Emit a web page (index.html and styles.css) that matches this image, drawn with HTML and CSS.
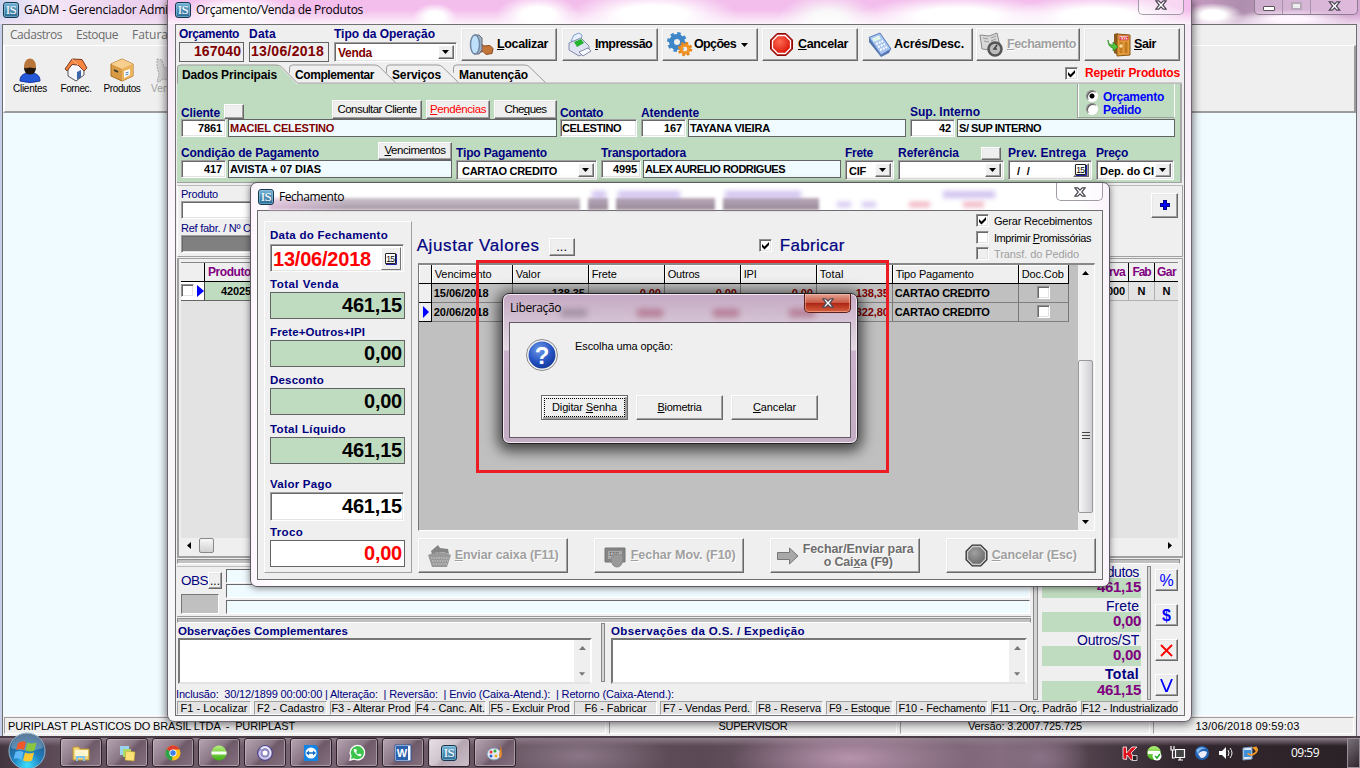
FILE: index.html
```html
<!DOCTYPE html>
<html lang="pt-BR">
<head>
<meta charset="utf-8">
<title>GADM - Gerenciador</title>
<link rel="stylesheet" href="styles.css">
</head>
<body>
<svg width="0" height="0" class="defs">
  <defs>
    <radialGradient id="gBlue" cx=".4" cy=".3" r=".8"><stop offset="0" stop-color="#6f9bea"/><stop offset=".6" stop-color="#2350c0"/><stop offset="1" stop-color="#10308c"/></radialGradient>
    <radialGradient id="gRed" cx=".4" cy=".35" r=".7"><stop offset="0" stop-color="#ff6a50"/><stop offset="1" stop-color="#d81208"/></radialGradient>
    <radialGradient id="gGrey" cx=".4" cy=".35" r=".7"><stop offset="0" stop-color="#a0a0a0"/><stop offset="1" stop-color="#6a6a6a"/></radialGradient>
    <radialGradient id="gOrb" cx=".5" cy=".9" r=".9"><stop offset="0" stop-color="#3fe0ff"/><stop offset=".45" stop-color="#1f7fc0"/><stop offset="1" stop-color="#2a4a70"/></radialGradient>
    <linearGradient id="gGreen" x1="0" y1="0" x2="0" y2="1"><stop offset="0" stop-color="#b6f07a"/><stop offset="1" stop-color="#3fae14"/></linearGradient>
    <symbol id="xmark" viewBox="0 0 12 10"><path d="M.8.8h3L6 3.1 8.200.8h3L7.800 5l3.400 4.200h-3L6 6.900 3.800 9.200h-3L4.200 5z" fill="#fff" stroke="#4c4652" stroke-width="1.200"/></symbol>
    <symbol id="down" viewBox="0 0 8 4"><path d="M0 0h7L3.500 4z"/></symbol>
    <symbol id="check" viewBox="0 0 9 9"><path d="M1 3v3l2.500 2.500L8 4V1L3.500 5.500z"/></symbol>
    <symbol id="cal" viewBox="0 0 12 12"><path d="M1 .5h9.500v10H.5v-10" fill="#fff" stroke="#222"/><path d="M11.500 1v10.500H1" fill="none" stroke="#22a"/><text x="1.200" y="8.800" font-size="8.500" font-weight="normal" textLength="8.800" font-family="Liberation Sans">15</text></symbol>
  </defs>
</svg>

<div class="main-win">
  <div class="main-title"><span class="is">IS</span><span data-w="144">GADM - Gerenciador Admi</span>
    <div class="capbtns"><b class="cmin"><i></i></b><b class="cmax"><i></i></b><b class="cx"><svg width="13" height="10"><use href="#xmark"/></svg></b></div>
  </div>
  <div class="main-client">
    <div class="menu"><span data-w="52">Cadastros</span><span data-w="42">Estoque</span><span data-w="36">Fatura</span></div>
    <div class="toolbar">
      <div class="tool"><svg width="24" height="26" viewBox="0 0 24 26"><path d="M2 24c0-6 4-8 10-8s10 2 10 8q-10 3-20 0z" fill="#2458d8" stroke="#1438a0"/><ellipse cx="12" cy="9" rx="6" ry="7.500" fill="#b9773b"/><path d="M6 10q1 2 3 1 3-1 6 0 2 1 3-1 0 7.500-6 7.500T6 10z" fill="#20160e"/></svg><span data-w="34">Clientes</span></div>
      <div class="tool"><svg width="24" height="26" viewBox="0 0 24 26"><path d="M4 12v7l8 5 8-6v-8l-8-6z" fill="#f5f7fa" stroke="#555"/><path d="M1 12 8 2l10 .5L23 11l-3 3-6-6-6-.5L3 14z" fill="#f58642" stroke="#7a3a22"/><path d="M13 15l4-2v7l-4 3z" fill="#3c68a8"/><path d="M8 2l6 6" stroke="#ffb080"/></svg><span data-w="31">Fornec.</span></div>
      <div class="tool"><svg width="24" height="26" viewBox="0 0 24 26"><path d="M1 7 12 2l11 5v12l-11 5L1 19z" fill="#d89a44" stroke="#a86d1c"/><path d="M1 7l11 5 11-5-11-5z" fill="#f6cf8e"/><path d="M12 12v12l11-5V7z" fill="#edb35c"/><path d="M14 14l6-2v6l-6 3z" fill="#fff"/><path d="M15.500 16l3-1M15.500 18l3-1" stroke="#4b7ab5"/><path d="M4 13l4 2" stroke="#333" stroke-width="1.500"/></svg><span data-w="37">Produtos</span></div>
      <div class="tool off"><svg width="24" height="26" viewBox="0 0 24 26"><path d="M1 2l5 1 2 7 5 2-2 6 4 6-8-2-4 3H1l2-8-2-7z" fill="#d4d4d4" stroke="#a8a8a8" stroke-dasharray="2 1"/></svg><span data-w="34">Vendas</span></div>
    </div>
    <div class="workspace"></div>
    <div class="status"><span class="s1"><i data-w="287">PURIPLAST PLASTICOS DO BRASIL LTDA  -  PURIPLAST</i></span><span class="s2"><i data-w="69">SUPERVISOR</i></span><span class="s3"><i data-w="114">Versão: 3.2007.725.725</i></span><span class="s4"><i data-w="104">13/06/2018 09:59:03</i></span></div>
  </div>
</div>

<div class="order-win">
  <div class="order-title"><span class="is">IS</span><span data-w="167">Orçamento/Venda de Produtos</span><b class="close-tab"><svg width="12" height="10"><use href="#xmark"/></svg></b></div>
  <div class="order-client">
    <div class="head">
      <div class="grp g65"><label data-w="60">Orçamento</label><div class="num"><span data-w="47">167040</span></div></div>
      <div class="grp g80"><label data-w="27">Data</label><div class="num mid"><span data-w="73">13/06/2018</span></div></div>
      <div class="grp g123"><label data-w="101">Tipo da Operação</label><div class="combo maroon"><span data-w="34">Venda</span><b><svg width="8" height="4"><use href="#down"/></svg></b></div></div>
      <div class="cmds">
        <div class="btn c1"><svg width="26" height="26" viewBox="0 0 26 26"><path d="M11 11l4 3 6-.5 3 3-1 5-6 1-3-3-4 1z" fill="#c4753a" stroke="#8a4a1c"/><path d="M5 3h5l3 3v12l-3 4H5z" fill="#9fb2c6" stroke="#667"/><ellipse cx="6" cy="12.500" rx="4.500" ry="9.500" fill="#bfe0fa" stroke="#7088a4" stroke-width="1.500"/></svg><span data-w="51"><u>L</u>ocalizar</span></div>
        <div class="btn c2"><svg width="26" height="26" viewBox="0 0 26 26"><path d="M4 9l3-6 5-2 3 2-1 7z" fill="#e9f1ff" stroke="#7fa0d0"/><path d="M2 11l12-5 8 8v5l-10 5L2 18z" fill="#dfe3f2" stroke="#8088a8"/><path d="M7 10l7-3 3 4-7 4z" fill="#23b431"/><path d="M12 20l9-4 3 3-8 5z" fill="#f8faff" stroke="#8088a8"/></svg><span data-w="57"><u>I</u>mpressão</span></div>
        <div class="btn c3"><svg width="26" height="26" viewBox="0 0 26 26"><circle cx="10" cy="10" r="5.500" fill="none" stroke="#3d86c8" stroke-width="5"/><circle cx="10" cy="10" r="8.500" fill="none" stroke="#3d86c8" stroke-width="3" stroke-dasharray="3.400 3.270"/><circle cx="18" cy="17" r="4" fill="none" stroke="#f2962a" stroke-width="3.600"/><circle cx="18" cy="17" r="6" fill="none" stroke="#e48418" stroke-width="2.500" stroke-dasharray="2.400 2.310"/></svg><span data-w="42">Opções</span><svg class="arr" width="8" height="4"><use href="#down"/></svg></div>
        <div class="btn c4"><svg width="26" height="26" viewBox="0 0 26 26"><path d="M8 1.500h9l6.500 6.500v9L17 23.500H8L1.500 17V8z" fill="#b00c08" stroke="#8c0a06"/><path d="M8.700 3.500h7.600l5.200 5.200v7.600l-5.200 5.200H8.700l-5.200-5.200V8.700z" fill="url(#gRed)" stroke="#fff" stroke-width="1.300"/></svg><span data-w="50"><u>C</u>ancelar</span></div>
        <div class="btn c5"><svg width="26" height="26" viewBox="0 0 26 26"><path d="M2 6l11-5 11 16-2 4-8 4L2 10z" fill="#5577ae"/><path d="M2 5.500L13 1l11 16-10 6z" fill="#a7c5f0" stroke="#5c80bb"/><path d="M5 6.500l7-3 2 3.500-7 3z" fill="#e2f5e8"/><path d="M9 12l7-3M11 15l7-3M13 18l7-3" stroke="#fff" stroke-width="2" stroke-dasharray="2 1"/></svg><span data-w="70">Acrés/Desc.</span></div>
        <div class="btn c6 dis"><svg width="26" height="26" viewBox="0 0 26 26"><path d="M2 3l9 1 8-3 3 13-9 4-9-1z" fill="#d8d8d8" stroke="#8c8c8c"/><path d="M5 6l5 1M6 9l5 1M13 6l5-2M13 9l5-2" stroke="#999"/><circle cx="17" cy="17" r="6.500" fill="#bcbcbc" stroke="#555" stroke-width="2.500"/><path d="M19 13l-3 4h3" fill="none" stroke="#444" stroke-width="1.500"/></svg><span data-w="69"><u>F</u>echamento</span></div>
        <div class="btn c7"><svg width="26" height="26" viewBox="0 0 26 26"><path d="M7 2l4-1v22l-4-2z" fill="#8a5a20"/><path d="M10 2l13 1v20l-13 1z" fill="#e39c3c" stroke="#8a5514"/><path d="M12 4h9v4h-9z" fill="#fff" stroke="#c44" stroke-width=".7"/><text x="12.600" y="7.600" font-size="4" fill="#d00" font-weight="bold">EXIT</text><path d="M12.500 10h3v11h-3zM17.500 10h3v11h-3z" fill="#c47b20"/><circle cx="14" cy="14" r="1.700" fill="#ffe0a0"/><path d="M1 8q0 5 5 5v-3l5 5-5 4v-3q-5-1-5-8z" fill="#4fc43c" stroke="#2b8520" stroke-width=".7"/></svg><span data-w="22"><u>S</u>air</span></div>
      </div>
    </div>
    <div class="tabs">
      <svg class="tabshape" width="1008" height="20" viewBox="0 0 1008 20"><path d="M1 20V4q0-3 3-3h98l18 18v1z" fill="#c0dcc0"/><path d="M113 9V4q0-3 3-3h83q3 0 5 2l17 17h-100z" fill="#efefef"/><path d="M1.500 20V4q0-3 3-3h96q3 0 5 2l16 16.500H1006M113.500 9V4q0-3 3-3h82q3 0 5 2l16 16M210.500 9V4q0-3 3-3h48q3 0 5 2l16 16M277.500 9V4q0-3 3-3h68q3 0 5 2l16 16" transform="scale(1 .98)" fill="none" stroke="#999"/></svg>
      <span class="t1" data-w="95">Dados Principais</span><span class="t2" data-w="79">Complementar</span><span class="t3" data-w="49">Serviços</span><span class="t4" data-w="69">Manutenção</span>
      <div class="repeat"><i class="cb"><svg width="9" height="9"><use href="#check"/></svg></i><span data-w="95">Repetir Produtos</span></div>
    </div>

    <div class="green">
      <div class="row1">
        <div class="grp g376"><div class="lab"><label data-w="39">Cliente</label><b class="btn mini"></b><b class="btn sb b89 pushr"><span data-w="79">Consultar Cliente</span></b><b class="btn sb b62 red"><span data-w="56"><u>P</u>endências</span></b><b class="btn sb b63"><span data-w="42">Che<u>q</u>ues</span></b></div>
          <div class="flds"><div class="edit r w45"><span data-w="24">7861</span></div><div class="ro grow maroon"><span data-w="104">MACIEL CELESTINO</span></div></div></div>
        <div class="grp g77"><div class="lab"><label data-w="43">Contato</label></div><div class="flds"><div class="edit grow"><span data-w="59">CELESTINO</span></div></div></div>
        <div class="grp g264"><div class="lab"><label data-w="58">Atendente</label></div><div class="flds"><div class="edit r w45"><span data-w="18">167</span></div><div class="ro grow"><span data-w="80">TAYANA VIEIRA</span></div></div></div>
        <div class="grp g265"><div class="lab up"><label data-w="70">Sup. Interno</label><div class="radios"><p><i class="rd on"></i><span data-w="61">Orçamento</span></p><p><i class="rd"></i><span data-w="38">Pedido</span></p></div></div><div class="flds"><div class="edit r w45"><span data-w="12">42</span></div><div class="ro grow"><span data-w="82">S/ SUP INTERNO</span></div></div></div>
      </div>
      <div class="row2">
        <div class="grp g271"><div class="lab"><label data-w="138">Condição de Pagamento</label><b class="btn sb b73 pushr"><span data-w="61"><u>V</u>encimentos</span></b></div><div class="flds"><div class="edit r w45"><span data-w="18">417</span></div><div class="ro grow"><span data-w="91">AVISTA + 07 DIAS</span></div></div></div>
        <div class="grp g141"><div class="lab"><label data-w="91">Tipo Pagamento</label></div><div class="combo pad"><span data-w="95">CARTAO CREDITO</span><b><svg width="8" height="4"><use href="#down"/></svg></b></div></div>
        <div class="grp g241"><div class="lab"><label data-w="85">Transportadora</label></div><div class="flds"><div class="edit r w40"><span data-w="24">4995</span></div><div class="ro grow"><span data-w="140">ALEX AURELIO RODRIGUES</span></div></div></div>
        <div class="grp g51"><div class="lab"><label data-w="28">Frete</label></div><div class="combo"><span data-w="17">CIF</span><b><svg width="8" height="4"><use href="#down"/></svg></b></div></div>
        <div class="grp g105"><div class="lab"><label data-w="61">Referência</label><b class="btn mini pushr"></b></div><div class="combo"><span></span><b><svg width="8" height="4"><use href="#down"/></svg></b></div></div>
        <div class="grp g82"><div class="lab"><label data-w="78">Prev. Entrega</label></div><div class="combo date"><span data-w="13">/  /</span><b><svg width="12" height="12"><use href="#cal"/></svg></b></div></div>
        <div class="grp g78"><div class="lab"><label data-w="32">Preço</label></div><div class="combo"><span data-w="54">Dep. do CI</span><b><svg width="8" height="4"><use href="#down"/></svg></b></div></div>
      </div>
    </div>

    <div class="prod">
      <div class="prodin"><label data-w="37">Produto</label><div class="edit w400"></div><label data-w="98">Ref fabr. / Nº Original</label><div class="edit w400 dark"></div></div>
      <div class="btn plus"><svg width="10" height="10"><path d="M5 0v10M0 5h10" stroke="#008" stroke-width="4"/><path d="M5 1v8M1 5h8" stroke="#00f" stroke-width="2"/></svg></div>
    </div>
    <div class="items">
      <div class="ihead"><span class="i0"></span><span class="i1"><em data-w="43">Produto</em></span><span class="igap"></span><span class="i2"><em data-w="42">Reserva</em></span><span class="i3"><em data-w="18">Fab</em></span><span class="i4"><em data-w="19">Gar</em></span></div>
      <div class="irow"><span class="i0"><i class="cb"></i><svg width="8" height="12"><path d="M0 0l7 6-7 6z" fill="#00f"/></svg></span><span class="i1"><em data-w="30">42025</em></span><span class="igap"></span><span class="i2"><em data-w="33">0,0000</em></span><span class="i3">N</span><span class="i4">N</span></div>
      <div class="ifill"></div>
      <div class="hscroll"><svg width="4" height="7" viewBox="0 0 4 7"><path d="M4 0v7L0 3.500z"/></svg><i></i><svg class="pushr" width="4" height="7" viewBox="0 0 4 7"><path d="M0 0v7l4-3.500z"/></svg></div>
    </div>
    <div class="hsplit"></div>

    <div class="lower">
      <div class="lleft">
        <div class="obs"><div class="obsl"><p><span data-w="27">OBS</span><b class="btn dots">...</b></p><i class="greybox"></i></div><div class="obsf"><i></i><i></i><i></i></div></div>
        <div class="hsplit"></div>
        <div class="notes">
          <div class="note n1"><label data-w="170">Observações Complementares</label><div class="area"><span class="vs"><svg width="7" height="4"><path d="M0 4h7L3.500 0z"/></svg><svg width="7" height="4"><use href="#down"/></svg></span></div></div>
          <i class="vbar nb"></i>
          <div class="note n2"><label data-w="194">Observações da O.S. / Expedição</label><div class="area"><span class="vs"><svg width="7" height="4"><path d="M0 4h7L3.500 0z"/></svg><svg width="7" height="4"><use href="#down"/></svg></span></div></div>
        </div>
        <div class="log"><span data-w="498">Inclusão:  30/12/1899 00:00:00 | Alteração:  | Reversão:  | Envio (Caixa-Atend.):  | Retorno (Caixa-Atend.):</span></div>
      </div>
      <i class="vbar v1"></i>
      <div class="totals">
        <p><span data-w="53">Produtos</span></p><b><span data-w="44">461,15</span></b>
        <p><span data-w="33">Frete</span></p><b><span data-w="28">0,00</span></b>
        <p><span data-w="62">Outros/ST</span></p><b><span data-w="28">0,00</span></b>
        <p class="bold"><span data-w="34">Total</span></p><b><span data-w="44">461,15</span></b>
      </div>
      <i class="vbar v2"></i>
      <div class="side"><div class="btn">%</div><div class="btn sbold">$</div><div class="btn"><svg width="13" height="13"><path d="M1 1l11 11M12 1L1 12" stroke="#f00" stroke-width="1.800"/></svg></div><div class="btn"><svg width="13" height="13"><path d="M1 0l5 12h1L12 0" stroke="#00f" stroke-width="1.800" fill="none"/></svg></div></div>
    </div>
    <div class="keys"><span><i data-w="67">F1 - Localizar</i></span><span><i data-w="67">F2 - Cadastro</i></span><span><i data-w="79">F3 - Alterar Prod</i></span><span><i data-w="69">F4 - Canc. Alt.</i></span><span><i data-w="79">F5 - Excluir Prod</i></span><span><i data-w="62">F6 - Fabricar</i></span><span><i data-w="87">F7 - Vendas Perd.</i></span><span><i data-w="63">F8 - Reserva</i></span><span><i data-w="61">F9 - Estoque</i></span><span><i data-w="87">F10 - Fechamento</i></span><span><i data-w="85">F11 - Orç. Padrão</i></span><span><i data-w="96">F12 - Industrializado</i></span></div>
  </div>
</div>

<div class="close-win">
  <div class="ghosts"><i class="h1"></i><i class="h2"></i><i class="h3"></i><i class="h4"></i></div>
  <div class="ghost-text"><i class="q1"></i><i class="q2"></i><i class="q3"></i><i class="q4"></i></div>
  <div class="ghost-low"><i></i><i></i><i class="pk"></i><i class="pk"></i></div>
  <div class="close-title"><span class="is">IS</span><span data-w="65">Fechamento</span><b class="close-tab"><svg width="12" height="10"><use href="#xmark"/></svg></b></div>
  <div class="close-client">
    <div class="sums">
      <label data-w="118">Data do Fechamento</label><div class="big edit dt"><span data-w="98">13/06/2018</span><b><svg width="12" height="12"><use href="#cal"/></svg></b></div>
      <label data-w="69">Total Venda</label><div class="big"><span data-w="60">461,15</span></div>
      <label data-w="95">Frete+Outros+IPI</label><div class="big"><span data-w="38">0,00</span></div>
      <label data-w="54">Desconto</label><div class="big d4"><span data-w="38">0,00</span></div>
      <label data-w="76">Total Líquido</label><div class="big d5"><span data-w="60">461,15</span></div>
      <label data-w="62">Valor Pago</label><div class="big edit wh"><span data-w="60">461,15</span></div>
      <label data-w="33">Troco</label><div class="big tr"><span data-w="38">0,00</span></div>
    </div>
    <div class="cright">
      <div class="chead">
        <span class="h17" data-w="123">Ajustar Valores</span><b class="btn dots">...</b>
        <i class="cb fab"><svg width="9" height="9"><use href="#check"/></svg></i><span class="h17" data-w="65">Fabricar</span>
        <div class="opts"><p><i class="cb"><svg width="9" height="9"><use href="#check"/></svg></i><span data-w="98">Gerar Recebimentos</span></p><p><i class="cb"></i><span data-w="97">Imprimir <u>P</u>romissórias</span></p><p class="off"><i class="cb"></i><span data-w="85">Transf. do Pedido</span></p></div>
      </div>
      <div class="pgrid">
        <div class="ptab">
          <div class="pr ph"><span></span><span><em data-w="57">Vencimento</em></span><span><em data-w="25">Valor</em></span><span><em data-w="25">Frete</em></span><span><em data-w="32">Outros</em></span><span><em data-w="13">IPI</em></span><span><em data-w="24">Total</em></span><span><em data-w="78">Tipo Pagamento</em></span><span><em data-w="42">Doc.Cob</em></span></div>
          <div class="pr"><span></span><span><em data-w="55">15/06/2018</em></span><span class="v">138,35</span><span class="v m">0,00</span><span class="v m">0,00</span><span class="v m">0,00</span><span class="v m">138,35</span><span><em data-w="95">CARTAO CREDITO</em></span><span class="c"><i class="cb"></i></span></div>
          <div class="pr"><span><svg width="6" height="12"><path d="M0 0l6 6-6 6z" fill="#00f"/></svg></span><span><em data-w="55">20/06/2018</em></span><span class="v"></span><span class="v m"></span><span class="v m"></span><span class="v m"></span><span class="v m">322,80</span><span><em data-w="95">CARTAO CREDITO</em></span><span class="c"><i class="cb"></i></span></div>
        </div>
        <div class="vscroll"><svg width="8" height="4"><path d="M0 4h7L3.500 0z"/></svg><i><svg width="8" height="9"><path d="M0 .5h8M0 3.500h8M0 6.500h8" stroke="#444"/></svg></i><svg width="8" height="4"><use href="#down"/></svg></div>
      </div>
      <div class="cbtns">
        <div class="btn dis e1"><svg width="25" height="24" viewBox="0 0 25 24"><path d="M1 11q11-6 23 0l-4 12H5z" fill="#999"/><path d="M4 7l7-6 2 3 8 1 1 5q-9-4-17 0z" fill="#858585"/><path d="M4 14h18M5 17h16M6 20h14" stroke="#d0d0d0" stroke-dasharray="1.500 1"/></svg><span data-w="104"><u>E</u>nviar caixa (F11)</span></div>
        <div class="btn dis e2"><svg width="25" height="24" viewBox="0 0 25 24"><path d="M2 4h20v14H2z" fill="#858585" stroke="#777"/><path d="M5 7h14v8H5z" fill="#a8a8a8"/><text x="6" y="12" font-size="6" fill="#666">100</text><path d="M9 12q2-2 3-1 1-3 2 0 2-3 3 0 3-1 3 4-1 8-6 8t-6-8z" fill="#999" stroke="#888"/></svg><span data-w="105"><u>F</u>echar Mov. (F10)</span></div>
        <div class="btn dis dark e3"><svg width="22" height="18" viewBox="0 0 22 18"><path d="M.5 5.500h12V1l8.500 8-8.500 8v-4.500H.5z" fill="#a8a8a8" stroke="#777"/></svg><p><span data-w="111">Fechar/Enviar para</span><br><span data-w="69">o Cai<u>x</u>a (F9)</span></p></div>
        <div class="btn dis e4"><svg width="26" height="26" viewBox="0 0 26 26"><path d="M8 1.500h9l6.500 6.500v9L17 23.500H8L1.500 17V8z" fill="#333"/><path d="M8.700 3.500h7.600l5.200 5.200v7.600l-5.200 5.200H8.700l-5.200-5.200V8.700z" fill="url(#gGrey)" stroke="#ccc" stroke-width="1.300"/></svg><span data-w="85"><u>C</u>ancelar (Esc)</span></div>
      </div>
    </div>
  </div>
</div>

<div class="marker"></div>

<div class="dlg">
  <div class="dlg-ghost"><i></i><i class="gm"></i><i class="gm"></i><i class="gm"></i></div>
  <div class="dlg-title"><span data-w="51">Liberação</span><b class="redx"><svg width="12" height="10"><use href="#xmark"/></svg></b></div>
  <div class="dlg-client">
    <div class="dlg-msg"><svg width="32" height="32" viewBox="0 0 32 32"><circle cx="16" cy="16" r="15.500" fill="#f4f4f4" stroke="#888"/><circle cx="16" cy="16" r="13.500" fill="url(#gBlue)"/><text x="16" y="25" text-anchor="middle" font-family="Liberation Sans" font-weight="bold" font-size="24" fill="#fff">?</text></svg><span data-w="98">Escolha uma opção:</span></div>
    <div class="dlg-btns"><div class="btn def"><span data-w="65">Digitar <u>S</u>enha</span></div><div class="btn"><span data-w="44"><u>B</u>iometria</span></div><div class="btn"><span data-w="43"><u>C</u>ancelar</span></div></div>
  </div>
</div>

<div class="taskbar">
  <svg class="orb" width="40" height="37" viewBox="0 0 40 37"><circle cx="20" cy="19" r="18" fill="url(#gOrb)" stroke="#8fb8d0"/><path d="M4 16a16 15 0 0 1 32 0q-16 5-32 0z" fill="#fff" opacity=".25"/><path d="M11 11q4-3 8-1l-2 8q-4-2-8 0z" fill="#f0592a"/><path d="M20.500 10.500q4 2 9 0l-2 8q-4 2-9 0z" fill="#8cc63f"/><path d="M8.500 20q4-2 8 0l-2 8q-4-3-8-1z" fill="#5fb9f8"/><path d="M18 20.500q4 2 9 0l-2 8q-4 2-9 0z" fill="#fdc82f"/></svg>
  <div class="tasks">
    <b><svg width="18" height="18" viewBox="0 0 18 18"><path d="M1 3h6l1 2h9v11H1z" fill="#f3d67a" stroke="#b89332"/><path d="M3 6h13v6H3z" fill="#fff6cf"/><path d="M4 17v-5h9v5h-2v-3H6v3z" fill="#7fc3ea"/></svg></b>
    <b><svg width="18" height="18" viewBox="0 0 18 18"><path d="M2 2h9v9H2z" fill="#9bd3ee"/><path d="M5 5h8v8H5z" fill="#a6dc6b"/><path d="M8 7l9 1-1 9-9-1z" fill="#fbe277" stroke="#c8a52e" stroke-width=".6"/></svg></b>
    <b><svg width="18" height="18" viewBox="0 0 18 18"><circle cx="9" cy="9" r="7.500" fill="#fbc116"/><path d="M9 9L2.500 5.200a7.500 7.500 0 0 1 13.200.3H9z" fill="#df3b30"/><path d="M9 9L2.500 5.200A7.500 7.500 0 0 0 8 16.500z" fill="#2ba24c"/><circle cx="9" cy="9" r="3.600" fill="#fff"/><circle cx="9" cy="9" r="2.700" fill="#3b7ded"/></svg></b>
    <b><svg width="18" height="18" viewBox="0 0 18 18"><circle cx="9" cy="9" r="7.500" fill="url(#gGreen)"/><path d="M1.500 7.500h15v3h-15z" fill="#f6fff0"/></svg></b>
    <b><svg width="18" height="18" viewBox="0 0 18 18"><circle cx="9" cy="9" r="7.500" fill="#8d86c0" stroke="#4c4188"/><path d="M5 5q4-4 8 0 3 4 0 8" fill="none" stroke="#e8e6fa" stroke-width="1.800"/><path d="M13 13q-4 3-8 0-3-4 0-6" fill="none" stroke="#cfcbee" stroke-width="1.800"/><circle cx="9" cy="9" r="2.500" fill="#fff"/></svg></b>
    <b><svg width="16" height="18" viewBox="0 0 16 18"><path d="M1 1h12l2 3v13H1z" fill="#1484e4"/><circle cx="8" cy="9" r="5.500" fill="#fff"/><path d="M3 9l3-2.500v1.700h4V6.500L13 9l-3 2.500V9.800H6v1.700z" fill="#0e6cc8"/></svg></b>
    <b><svg width="18" height="18" viewBox="0 0 18 18"><path d="M2 16l1-4a7.200 7.200 0 1 1 3 3z" fill="#3cc34c" stroke="#fff" stroke-width="1.300"/><path d="M6 5q-1 2 2 5t5 2l.5-1.500-2-1-1 1q-2-1-2.500-2.500l1-1L8 5z" fill="#fff"/></svg></b>
    <b><svg width="18" height="18" viewBox="0 0 18 18"><path d="M1 1h16v16H1z" fill="#f5f8ff" stroke="#2b579a"/><path d="M2 2h12v14H2z" fill="#2b62b0"/><text x="8" y="13" text-anchor="middle" font-size="11" font-weight="bold" font-family="Liberation Sans" fill="#fff">W</text></svg></b>
    <b class="act"><span class="is">IS</span></b>
    <b><svg width="18" height="18" viewBox="0 0 18 18"><ellipse cx="8" cy="10" rx="7" ry="6" fill="#dfe9f4" stroke="#8097b4"/><circle cx="5" cy="8" r="1.500" fill="#e33"/><circle cx="9" cy="7" r="1.500" fill="#3a3"/><circle cx="5" cy="12" r="1.500" fill="#36c"/><circle cx="10" cy="12" r="1.500" fill="#ea2"/><path d="M15 1l1 10-2 4-1-4z" fill="#e48a2a"/></svg></b>
  </div>
  <div class="tray">
    <svg width="16" height="16" viewBox="0 0 16 16"><path d="M1 2h3.500v6L10 2h5L9 8l5 7H9L5 10l-.5 4.500L1 14z" fill="#e0131c" stroke="#fff" stroke-width=".8"/><path d="M10.500 10.500h4.500v5h-4.500z" fill="#222" stroke="#fff" stroke-width=".7"/></svg>
    <svg width="16" height="16" viewBox="0 0 16 16"><circle cx="8" cy="8" r="7" fill="url(#gGreen)"/><path d="M2 6h12v3H2z" fill="#fff"/><circle cx="11" cy="11" r="4.500" fill="#fff"/><path d="M9 11l2 2 3-4" stroke="#2a2" fill="none" stroke-width="1.500"/></svg>
    <svg width="16" height="16" viewBox="0 0 16 16"><path d="M5.500 4.500h9v8h-9zM8 15h5M10 13v2" fill="#444" stroke="#fff" stroke-width="1.200"/><path d="M1 1v4h3V1M2.500 5v8H5" fill="none" stroke="#fff" stroke-width="1.200"/></svg>
    <svg width="16" height="16" viewBox="0 0 16 16"><circle cx="8" cy="8" r="7" fill="#2364b4"/><path d="M4 9q4-5 9-2-1 6-6 6z" fill="#eef"/><path d="M2 5q5-5 10-1-6-1-8 5z" fill="#7db5f0"/></svg>
    <svg width="16" height="16" viewBox="0 0 16 16"><path d="M1 6h3l4-4v12l-4-4H1z" fill="#fff"/><path d="M10 5q2 3 0 6M12 3q4 5 0 10" fill="none" stroke="#eee"/></svg>
    <svg width="16" height="16" viewBox="0 0 16 16"><path d="M1 3l9-1v12l-9 1z" fill="#dce9f7" stroke="#7796b8"/><path d="M2 5h7v7H2z" fill="#3f90dc"/><path d="M6 8a5 3 -30 1 0 8-5" fill="none" stroke="#f29a2a" stroke-width="1.800"/><path d="M10 2l5-.5-1 5z" fill="#f29a2a"/></svg>
    <span class="clock" data-w="28">09:59</span>
    <i class="peek"></i>
  </div>
</div>
<script src="fit.js"></script>
</body>
</html>
```

FILE: fit.js
```js
// Spreads each caption to the pixel width it has in the form's bitmap font.
document.querySelectorAll('[data-w]').forEach(function (el) {
  el.style.letterSpacing = '0';
  var range = document.createRange();
  range.selectNodeContents(el);
  var natural = range.getBoundingClientRect().width;
  var gap = (Number(el.dataset.w) - natural) / Math.max(1, el.textContent.length);
  el.style.letterSpacing = gap.toFixed(3) + 'px';
});
```

FILE: styles.css
```css
* { box-sizing: border-box; }
body { margin: 0; width: 1360px; height: 768px; overflow: hidden; position: relative; background: #4a3f4a; font: 11px/13px "Liberation Sans", Arial, sans-serif; color: #000; white-space: nowrap; }
.status i, .log span, .date span { white-space: pre; }
p { margin: 0; }
i, em { font-style: normal; }
svg { display: block; flex: none; }
span, label, b, i { flex: none; }
.defs { position: absolute; }
u { text-decoration: underline; text-underline-offset: 1px; }

/* shared controls */
.btn { display: flex; align-items: center; justify-content: center; background: #efefef; border: 1px solid; border-color: #fff #696969 #696969 #fff; box-shadow: inset -1px -1px #a0a0a0, inset 1px 1px #e8e8e8; font-weight: normal; }
.edit { background: #fff; border: 1px solid; border-color: #a0a0a0 #fff #fff #a0a0a0; box-shadow: inset 1px 1px #696969, inset -1px -1px #e3e3e3; }
.ro { background: #f0fbff; border: 1px solid #646464; }
.cb { display: flex; width: 13px; height: 13px; padding: 1px; background: #fff; border: 1px solid; border-color: #909090 #fff #fff #909090; box-shadow: inset 1px 1px #696969, inset -1px -1px #e3e3e3; }
.is { width: 16px; height: 16px; border-radius: 3px; border: 1px solid #17374f; background: linear-gradient(#75b4d6, #2a6b94); color: #fff; font: 13px/14px "Liberation Serif", serif; text-align: center; letter-spacing: -.5px; box-shadow: inset 0 0 0 .5px #9fd0e8; overflow: hidden; }
label { display: block; color: #000080; }
.pushr { margin-left: auto; }
.grow { flex: 1; }
.maroon, .m { color: #800000; }

/* main window */
.main-win { width: 1360px; height: 738px; padding: 0 3px 0 2px; background: linear-gradient(90deg, #c6cfe8, #f5eef8 30%, #e8dbe8); border-bottom: 2px solid #4a3d48; }
.main-title { height: 24px; margin: 0 -3px 0 -2px; padding: 0 0 4px 3px; display: flex; align-items: center; gap: 5px; font: 12px/18px "Open Sans", sans-serif; background: radial-gradient(ellipse 30px 12px at 1213px 15px, #fff 40%, transparent), radial-gradient(ellipse 60px 10px at 1290px 19px, #fff6ff 30%, transparent), linear-gradient(transparent 60%, #f4e4f4cc), linear-gradient(90deg, #cdd4ee, #f5e9fa 40px, #ecd2ee 130px, #f0c8ee 400px, #c89cc4 1190px, #ae8eae 1240px, #d8a8d4 1360px); }
.capbtns { align-self: flex-start; margin: -5px 2px 0 auto; height: 20px; display: flex; border: 1px solid #8d7d90; border-top: 0; border-radius: 0 0 5px 5px; background: #e6cbe688; }
.capbtns b { display: flex; align-items: center; justify-content: center; border-right: 1px solid #a594a8; padding-top: 2px; }
.cmin, .cmax { width: 28px; }
.cx { width: 46px; border: 0 !important; }
.cmin i { width: 12px; height: 5px; border: 1px solid #555; background: #fff; margin-top: 5px; border-radius: 1px; }
.cmax i { width: 11px; height: 8px; border: 2px solid #b9a8b9; background: #eee; }
.main-client { border: 1px solid #6d6d6d; border-bottom: 0; height: 712px; background: #efefef; display: flex; flex-direction: column; }
.menu { height: 20px; padding: 2px 0 0 7px; display: flex; gap: 14px; color: #6d6d6d; font: 12px/15px "Open Sans", sans-serif; }
.toolbar { height: 68px; display: flex; padding: 11px 0 0 6px; border-top: 1px solid #fff; border-bottom: 2px solid #9c9c9c; border-right: 2px solid #9c9c9c; border-left: 2px solid #fff; }
.tool { width: 46px; margin-left: -4px; margin-right: 4px; display: flex; flex-direction: column; align-items: center; font: 10px/12px "Liberation Sans", sans-serif; }
.off { color: #a0a0a0; }
.workspace { flex: 1; background: #f0fbff; }
.status { height: 21px; display: flex; padding: 1px 2px 2px 1px; gap: 3px; font-size: 11px; line-height: 17px; border-top: 1px solid #fff; }
.status span { border: 1px solid; border-color: #a0a0a0 #fff #fff #a0a0a0; text-align: center; }
.status .s1 { width: 602px; text-align: left; padding-left: 3px; }
.s2 { width: 288px; }
.s3 { width: 250px; }
.status .s4 { flex: 1; padding-right: 12px; }

/* order window */
.order-win { position: absolute; left: 167px; top: 0; width: 1025px; height: 722px; padding: 0 7px 5px 8px; border: 1px solid #6d646f; border-top: 0; border-radius: 0 0 7px 7px; background: linear-gradient(#f6e8f6, #fbf6fb 30%, #f7f7f9); box-shadow: 0 1px 9px 1px #00000090; }
.order-title { height: 24px; margin: 0 -7px 0 -8px; padding: 0 0 4px 7px; display: flex; align-items: center; gap: 5px; font: 12px/18px "Open Sans", sans-serif; background: linear-gradient(transparent 40%, #ffffffcc), radial-gradient(ellipse 60px 18px at 70px 12px, #fff 30%, transparent), radial-gradient(ellipse 22px 14px at 267px 17px, #fff 40%, transparent), radial-gradient(ellipse 42px 20px at 370px 15px, #fff 40%, transparent), radial-gradient(ellipse 85px 24px at 485px 15px, #fff 40%, transparent), radial-gradient(ellipse 50px 24px at 660px 18px, #f8f8f8 30%, transparent), radial-gradient(ellipse 100px 20px at 790px 16px, #fff 40%, transparent), radial-gradient(ellipse 90px 20px at 930px 16px, #fff 40%, transparent), #f3bdec; }
.close-tab { margin: 0 7px 0 auto; width: 46px; height: 18px; display: flex; align-items: center; justify-content: center; border: 1px solid #a29aa5; border-top: 0; border-radius: 0 0 5px 5px; background: #ffffff66; }
.order-title .close-tab { align-self: flex-start; margin: -4px 7px 0 auto; height: 19px; }
.order-client { width: 1010px; margin-left: -1px; height: 692px; border: 1px solid #707070; background: #efefef; display: flex; flex-direction: column; }
.head { height: 39px; display: flex; padding: 3px 0 0 3px; gap: 5px; }
.grp { display: flex; flex-direction: column; flex: none; }
.grp label { font-weight: bold; font-size: 12px; align-self: flex-start; }
.head label { height: 14px; }
.g65 { width: 65px; } .g80 { width: 80px; } .g123 { width: 123px; }
.g376 { width: 376px; } .g77 { width: 77px; } .g264 { width: 265px; } .g265 { width: 265px; }
.g271 { width: 271px; } .g141 { width: 141px; } .g241 { width: 240px; } .g51 { width: 49px; } .g105 { width: 106px; } .g82 { width: 84px; } .g78 { width: 78px; }
.w45 { width: 45px; } .w40 { width: 40px; } .w400 { width: 400px; }
.num { height: 20px; border: 1px solid #646464; font: bold 14px/17px "Liberation Sans", sans-serif; color: #800000; text-align: right; padding-right: 2px; }
.num.mid { padding-right: 4px; }
.combo { height: 20px; display: flex; justify-content: space-between; padding: 2px; background: #fff; border: 1px solid; border-color: #a0a0a0 #fff #fff #a0a0a0; box-shadow: inset 1px 1px #696969, inset -1px -1px #e3e3e3; font-weight: bold; line-height: 16px; }
.combo span { padding-left: 1px; color: inherit; }
.combo.maroon { font-size: 12px; }
.combo.pad span { padding-left: 3px; }
.combo.date span { padding-left: 6px; }
.combo b { width: 16px; display: flex; align-items: center; justify-content: center; background: #efefef; border: 1px solid; border-color: #fff #696969 #696969 #fff; box-shadow: inset -1px -1px #a0a0a0; }
.cmds { display: flex; margin-left: -1px; gap: 5px; font-size: 12.500px; }
.cmds .btn { height: 33px; font-weight: bold; justify-content: flex-start; padding: 0; }
.c1, .c2, .c3, .c4, .c7 { width: 96px; }
.cmds .c1 { gap: 2px; padding-left: 7px; }
.cmds .c2 { gap: 2px; padding-left: 4px; }
.cmds .c3 { margin-left: -1px; gap: 1px; padding-left: 4px; }
.cmds .c4 { margin-left: -1px; gap: 3px; padding-left: 6px; }
.cmds .c5 { width: 111px; margin-left: -1px; gap: 1px; padding-left: 4px; }
.cmds .c6 { width: 104px; margin-left: -2px; gap: 3px; padding-left: 1px; }
.cmds .c7 { margin-left: -1px; gap: 1px; padding-left: 22px; }
.arr { margin-left: 4px; }
.dis { color: #a0a0a0; text-shadow: 1px 1px #fff; }
.tabs { height: 20px; position: relative; display: flex; font-weight: bold; font-size: 12px; line-height: 13px; padding: 5px 0 0 6px; }
.tabs span { position: relative; }
.tabshape { position: absolute; left: 0; top: 0; }
.t1 { width: 113px; } .t2 { width: 97px; } .t3 { width: 67px; }
.repeat { margin: -2px 4px 0 auto; display: flex; gap: 7px; color: #f00; position: relative; }
.repeat span { line-height: 12px; }

.green { height: 100px; margin: 0 2px 0 1px; background: #c0dcc0; border-right: 2px solid #a8a8a8; border-bottom: 1px solid #a0a0a0; padding: 0 0 0 4px; }
.row1, .row2 { display: flex; gap: 4px; }
.row1 .lab { height: 35px; }
.row1 label { margin-bottom: -1px; }
.row2 { padding-top: 5px; }
.row2 .lab { height: 18px; }
.lab { display: flex; align-items: flex-end; gap: 4px; }
.lab label { align-self: flex-end !important; }
.row1 .g376 { margin-right: -1px; }
.row1 .lab.up { align-items: flex-start; }
.row1 .lab.up label { align-self: flex-start !important; margin-top: 22px; }
.flds { display: flex; gap: 2px; }
.flds > div { height: 18px; padding: 0 1px; font-weight: bold; font-size: 11px; line-height: 17px; }
.flds .r { text-align: right; padding-right: 3px; }
.mini { width: 20px; height: 15px; }
.row2 .mini { height: 13px; margin-right: 3px; }
.sb { height: 19px; font-size: 11.500px; }
.b89 { width: 90px; } .b62 { width: 64px; } .b63 { width: 63px; } .b73 { width: 74px; height: 18px; }
.red { color: #f00; }
.radios { width: 98px; height: 34px; margin-left: auto; padding: 6px 0 0 8px; border: 1px solid #a0a0a0; border-top: 0; border-right-color: #fff; color: #00f; font-weight: bold; font-size: 12px; box-shadow: inset 1px 0 #fff; }
.radios p { display: flex; gap: 5px; height: 13px; line-height: 14px; }
.rd { width: 12px; height: 12px; border-radius: 50%; border: 1px solid #888; border-right-color: #fff; border-bottom-color: #fff; background: #fff; box-shadow: inset 1px 1px #555; }
.rd.on { background: radial-gradient(#000 2px, #fff 3px); }

.prod { height: 73px; margin: 2px 1px 0; border: 1px solid #a0a0a0; border-left-color: #fff; border-top-color: #bbb; display: flex; justify-content: space-between; padding: 2px 4px 0 3px; }
.prodin { font-size: 11px; }
.prodin .edit { height: 18px; margin-bottom: 3px; }
.prodin label { height: 13px; width: 200px; }
.prod .dark { background: #808080; }
.plus { width: 27px; height: 25px; margin-top: 5px; }
.items { height: 303px; margin: 1px 1px 0; padding: 3px 4px 3px 2px; border: 1px solid #a0a0a0; border-width: 1px 1px 2px 2px; background: #efefef; display: flex; flex-direction: column; }
.ihead, .irow { display: flex; background: #c0dcc0; height: 19px; font-weight: bold; }
.ihead { background: #efefef; height: 20px; color: #800080; font-size: 12px; line-height: 18px; border-bottom: 1px solid #000; border-top: 1px solid #888; }
.ihead span { border-right: 1px solid #000; }
.irow span { border-right: 1px solid #444; border-bottom: 1px solid #666; line-height: 19px; font-size: 11px; }
.irow .igap { background: #e3e3e3; }
.irow .i3, .irow .i4, .irow .i2 { background: #e3e3e3; border-color: #b0b0b0; text-align: center; }
.irow .i0 { background: #fff; display: flex; align-items: center; gap: 3px; }
.i0 { width: 24px; }
.i1 { width: 90px; padding-left: 3px; }
.irow .i1 { padding-left: 16px; }
.ihead .igap, .irow .igap { flex: 1; }
.ihead .i2, .irow .i2 { width: 50px; text-align: right; padding-right: 3px; }
.i3 { width: 26px; text-align: center; }
.i4 { width: 23px; text-align: center; border-right: 0 !important; }
.ifill { flex: 1; background: #e3e3e3; }
.hscroll { height: 15px; background: #efefef; display: flex; align-items: center; padding: 0 6px; }
.hscroll i { width: 15px; height: 15px; margin-left: 8px; border: 1px solid #888; border-radius: 2px; background: linear-gradient(#f8f8f8, #d0d0d0); }
.hsplit { height: 5px; margin: 1px 4px 0 1px; border: 1px solid #909090; border-bottom-color: #fff; background: #c0c0c0; }

.lower { display: flex; height: 135px; margin-top: 2px; }
.lleft { width: 855px; display: flex; flex-direction: column; }
.obs { height: 51px; display: flex; padding: 2px 0 0 4px; margin-left: 1px; border-top: 1px solid #bbb; border-bottom: 1px solid #999; }
.obsl { width: 45px; padding-top: 2px; }
.obsl p { display: flex; color: #000080; font-size: 13.500px; line-height: 20px; height: 23px; }
.obsl .dots { width: 14px; height: 17px; color: #000; font-size: 12px; line-height: 10px; margin-top: 1px; }
.greybox { display: block; width: 38px; height: 20px; background: #c0c0c0; border: 1px solid; border-color: #777 #fff #fff #777; }
.obsf { width: 804px; display: flex; flex-direction: column; }
.obsf i { height: 14px; margin-bottom: 1px; background: #f0fbff; border: 1px solid; border-color: #696969 #fff #fff #696969; }
.obsf i:nth-child(2) { margin-bottom: 2px; }
.lleft .hsplit { margin: 1px 0 0 1px; }
.notes { height: 62px; display: flex; padding-left: 2px; }
.note label { font-weight: bold; height: 15px; padding-top: 2px; font-size: 11.500px; }
.n1 { width: 414px; } .n2 { width: 416px; }
.area { height: 46px; background: #fff; border: 2px solid; border-color: #777 #fff #e3e3e3 #777; display: flex; justify-content: flex-end; }
.vs { width: 16px; background: #efefef; display: flex; flex-direction: column; align-items: center; justify-content: space-between; padding: 6px 0; fill: #777; }
.vbar { display: block; width: 4px; border: 1px solid #888; background: #d4d4d4; }
.nb { height: 59px; margin: 0 6px 0 9px; }
.log { color: #000080; font-size: 11px; line-height: 14px; padding-top: 2px; }
.v1 { height: 134px; margin-left: 2px; width: 5px; }
.totals { width: 99px; margin: -2px 0 0 4px; text-align: right; color: #000080; font-size: 14px; }
.totals p { height: 14px; line-height: 16px; padding-right: 2px; }
.totals p.bold { font-weight: bold; height: 15px; }
.totals > b { display: block; height: 20px; line-height: 18px; background: #c0dcc0; color: #800080; font-size: 15px; }
.v2 { height: 134px; margin: 0 4px 0 6px; }
.side { padding-top: 3px; }
.side .btn { width: 23px; height: 22px; margin-bottom: 13px; color: #00f; font-size: 16px; }
.side .sbold { font-weight: bold; }
.keys { height: 14px; margin: 0 4px 0 1px; display: grid; grid-template-columns: 74px 73px 82px 71px 82px 83px 93px 67px 67px 92px 87px 98px; column-gap: 3px; font-size: 11px; }
.keys span { background: #e3e3e3; border: 1px solid; border-color: #a0a0a0 #fff #fff #a0a0a0; line-height: 12px; text-align: center; }

/* closing window */
.close-win { position: absolute; left: 250px; top: 182px; width: 860px; height: 405px; padding: 0 7px 7px 7px; border: 1px solid #5e5862; border-radius: 7px; background: linear-gradient(90deg, #fdf7fd, #fff 4%, #fff 96%, #fbf3fb); box-shadow: 0 1px 7px 0 #00000080; }
.close-title { position: relative; height: 27px; display: flex; align-items: center; gap: 5px; font: 12px/18px "Open Sans", sans-serif; }
.close-title .close-tab { align-self: flex-start; margin-right: -1px; height: 18px; width: 47px; }
.ghosts { position: absolute; left: 18px; top: 15px; right: 0; height: 12px; display: flex; gap: 8px; filter: blur(1.5px); }
.ghosts i { height: 12px; background: linear-gradient(#b9a9b9, #988998); }
.ghosts .h1 { width: 311px; background: linear-gradient(#ffffff66, transparent), linear-gradient(90deg, #d9b9d6, #a899a8 25%); } .h2 { width: 20px; } .h3 { width: 99px; } .h4 { width: 96px; }
.ghost-text, .ghost-low { position: absolute; display: flex; filter: blur(2.500px); opacity: .4; }
.ghost-text { left: 341px; top: 8px; }
.ghost-text i { height: 7px; background: #8a68d8; }
.q1 { width: 14px; } .q2 { width: 62px; margin-left: 12px; } .q3 { width: 76px; margin-left: 45px; } .q4 { width: 52px; margin-left: 142px; }
.ghost-low { left: 586px; top: 19px; gap: 11px; }
.ghost-low i { width: 14px; height: 5px; background: #8a68d8; }
.ghost-low .pk { width: 21px; margin-left: 22px; background: #d8365e; }
.close-client { height: 370px; width: 846px; margin-left: -1px; border: 1px solid #6d6d6d; background: #efefef; display: flex; padding: 10px 6px 6px 6px; }
.sums { width: 148px; height: 352px; border: 1px solid; border-color: #fff #a0a0a0 #a0a0a0 #fff; padding: 7px 5px 0 5px; }
.sums label { font-weight: bold; font-size: 11.500px; height: 14px; line-height: 12px; }
.big { width: 135px; height: 27px; margin: 0 0 7px; border: 1px solid #646464; background: #c0dcc0; font: bold 20px/24px "Liberation Sans", sans-serif; text-align: right; padding-right: 2px; }
.big.dt { width: 134px; height: 28px; margin: 1px 0 6px; display: flex; justify-content: space-between; color: #f00; background: #fff; border-color: #a0a0a0 #fff #fff #a0a0a0; padding: 2px 2px 1px 2px; }
.dt b { width: 20px; background: #efefef; border: 1px solid; border-color: #fff #777 #777 #fff; display: flex; align-items: center; justify-content: center; }
.big.d4 { margin-bottom: 8px; }
.big.d5 { margin-bottom: 14px; }
.big.wh { width: 134px; height: 29px; margin-bottom: 5px; background: #fff; border-color: #a0a0a0 #fff #fff #a0a0a0; line-height: 26px; padding-right: 1px; }
.big.tr { background: #fff; color: #f00; }
.cright { width: 680px; margin-left: 6px; display: flex; flex-direction: column; }
.chead { height: 42px; display: flex; align-items: flex-start; margin-left: -1px; }
.h17 { font-size: 17px; line-height: 20px; color: #000080; margin-top: 15px; -webkit-text-stroke: .2px #000080; }
.chead > .dots { width: 26px; height: 18px; margin: 17px 0 0 9px; line-height: 8px; font-size: 13px; }
.fab { margin: 18px 8px 0 184px; }
.opts { margin: -7px 4px 0 auto; display: flex; flex-direction: column; gap: 3px; font-size: 11px; }
.opts p { display: flex; gap: 5px; height: 13.500px; line-height: 14px; }
.opts .off .cb { background: #efefef; }
.pgrid { height: 269px; background: #c0c0c0; border: 1px solid; border-color: #888 #fff #fff #777; border-top-width: 2px; width: 677px; display: flex; justify-content: space-between; }
.pr { display: grid; grid-template-columns: 13px 81px 76px 76px 76px 76px 76px 126px 50px; height: 19px; font-weight: bold; font-size: 11px; line-height: 18px; }
.pr span { border-right: 1px solid #777; border-bottom: 1px solid #808080; padding-left: 2px; white-space: nowrap; overflow: hidden; }
.pr span:first-child { background: #efefef; padding: 3px 0 0 4px; border-color: #000; }
.ph span { background: #efefef; border-color: #000; font-weight: normal; font-size: 11px; box-shadow: inset 1px 1px #fff; padding-left: 3px; }
.pr .v { text-align: right; padding-right: 3px; letter-spacing: -.1px; }
.pr .c { display: flex; justify-content: center; align-items: center; padding: 0; }
.vscroll { width: 16px; background: #efefef; display: flex; flex-direction: column; align-items: center; padding: 6px 0 6px; }
.vscroll i { width: 15px; height: 153px; margin: auto 0 7px; border: 1px solid #999; border-radius: 2px; background: linear-gradient(90deg, #f6f6f6, #d0d0d4); display: flex; align-items: center; justify-content: center; }
.cbtns { display: flex; gap: 26px; margin-top: 7px; }
.cbtns .btn { width: 150px; height: 35px; font-weight: bold; font-size: 12.500px; justify-content: flex-start; gap: 3px; padding-left: 8px; }
.cbtns .e4 { padding-left: 17px; gap: 2px; }
.cbtns .e3 { gap: 4px; padding-left: 6px; color: #6d6d6d; text-align: center; }

.marker { position: absolute; left: 476px; top: 260px; width: 413px; height: 213px; border: 3px solid #ed1c24; }

/* message dialog */
.dlg { position: absolute; left: 502px; top: 293px; width: 356px; height: 151px; border: 1px solid #222; border-radius: 7px; padding: 0 6px; background: linear-gradient(#c4a9c4, #d5c3d3 28px, #e3d9e3 56px, #cbb3cb 57px, #c3adc3); box-shadow: inset 0 0 0 1px #f4e8f4, 0 3px 14px 4px #000000a8; }
.dlg-title { position: relative; height: 28px; display: flex; justify-content: space-between; font: 12px/28px "Open Sans", sans-serif; padding: 0 0 0 1px; }
.dlg-ghost { position: absolute; left: 58px; top: 15px; display: flex; gap: 50px; filter: blur(3px); opacity: .4; }
.dlg-ghost i { width: 26px; height: 8px; background: #605060; }
.dlg-ghost .gm { background: #8c2040; }
.redx { width: 47px; height: 19px; display: flex; align-items: center; justify-content: center; background: linear-gradient(#e5a393, #c95a45 48%, #aa2414 50%, #d8603c); border: 1px solid #5c1f1b; border-top: 0; border-radius: 0 0 5px 5px; box-shadow: inset 0 0 0 1px #ffc8b880; }
.dlg-client { height: 116px; border: 1px solid #625b66; background: #efefef; padding: 16px 0 0 16px; }
.dlg-msg { display: flex; gap: 17px; height: 56px; }
.dlg-msg span { margin-top: 1px; }
.dlg-btns { display: flex; gap: 8px; margin-left: 15px; }
.dlg-btns .btn { width: 87px; height: 25px; }
.dlg-btns .def { border-color: #696969; box-shadow: inset 1px 1px #fff, inset -2px -2px #a0a0a0; }
.def span { outline: 1px dotted #000; outline-offset: 0; padding: 2px 7px; margin: 0 -7px; }

/* taskbar */
.taskbar { height: 30px; background: radial-gradient(ellipse 90px 30px at 580px 18px, #8a7686, transparent), radial-gradient(ellipse 120px 34px at 850px 20px, #b794ad, transparent), radial-gradient(ellipse 50px 30px at 1040px 20px, #8a7286, transparent), linear-gradient(#8d7b89, #55465322 8px), linear-gradient(90deg, #40323d, #5e4c59 55px, #7c6878 300px, #66535f 520px, #5c4a56 700px, #8c7285 1000px, #4e3f49 1090px, #2c2228 1180px, #241c20); display: flex; position: relative; }
.orb { margin: -6px 0 0 7px; }
.tasks { display: flex; gap: 4px; margin-left: 13px; }
.tasks b { width: 42px; height: 29px; display: flex; align-items: center; justify-content: center; border: 1px solid #2d2129; border-radius: 3px; background: linear-gradient(135deg, #b7a5b3, #8b7785 45%, #6f5a69 55%, #85707f); box-shadow: inset 0 0 0 1px #c9bcc699; }
.tasks .act { background: linear-gradient(135deg, #e8e0e6, #d0c5cd 45%, #b5a6b1 55%, #cbbec8); }
.tray { margin-left: auto; display: flex; align-items: center; gap: 8px; }
.clock { color: #fff; font: 12px/16px "Open Sans", sans-serif; margin-left: 25px; }
.peek { width: 13px; height: 30px; margin-left: 20px; border: 1px solid #98909a; background: linear-gradient(135deg, #7a7078, #30272d); }
```
